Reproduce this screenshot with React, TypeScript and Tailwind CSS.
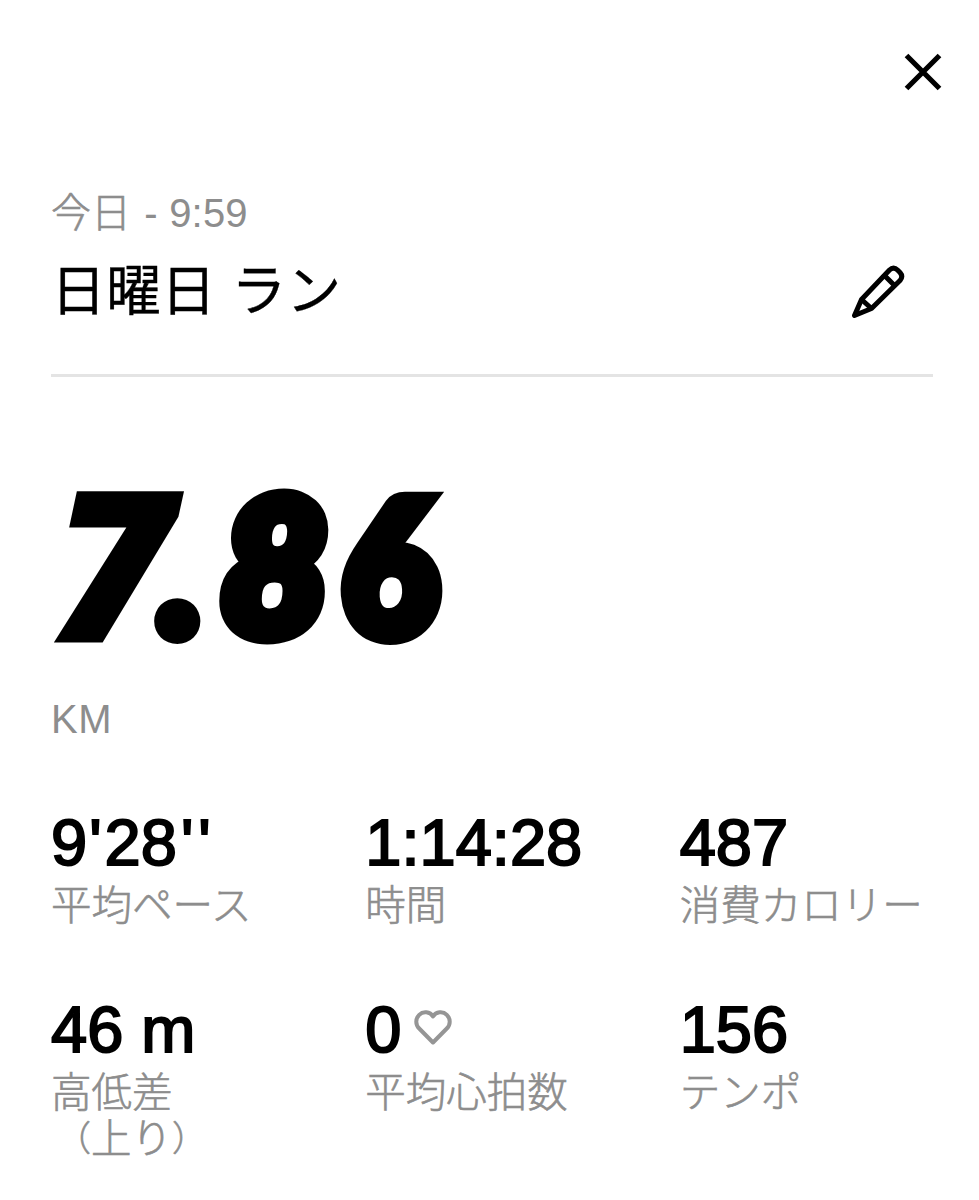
import type { ReactNode } from 'react'

type Stat = {
  value: ReactNode
  label: string
  note?: ReactNode
  icon?: ReactNode
}

function CloseIcon() {
  return (
    <svg width="40" height="40" viewBox="0 0 40 40" fill="none" stroke="currentColor" strokeWidth="5.2">
      <path d="M3.500 3.500L36.500 36.500M36.500 3.500L3.500 36.500" />
    </svg>
  )
}

function PencilIcon() {
  return (
    <svg
      width="56"
      height="56"
      viewBox="0 0 56 56"
      fill="none"
      stroke="currentColor"
      strokeWidth="5"
      strokeLinejoin="round"
    >
      <path d="M4.500 51.500L11.500 35.500L39.500 6Q43.500 2 47.500 6L50 8.500Q53.500 12.500 50 16.500L21.500 44.500Z" />
      <path d="M34.500 11.500L44.500 21.500M11.500 35.500L21.500 44.500" />
    </svg>
  )
}

function HeartIcon() {
  return (
    <svg
      width="38"
      height="36"
      viewBox="0 0 38 36"
      fill="none"
      stroke="currentColor"
      strokeWidth="4"
      strokeLinejoin="round"
      className="mb-[5px] text-[#959595]"
    >
      <path d="M19 6.500C16 1.500 9 1 5.200 4.800C1.300 8.800 1.300 14.500 5.200 18.500L19 32.500L32.800 18.500C36.700 14.500 36.700 8.800 32.800 4.800C29 1 22 1.500 19 6.500Z" />
    </svg>
  )
}

const pace = (
  <>
    9<span className="ml-[2px] mr-[3px]">'</span>28<span className="ml-[4px] tracking-[5px]">''</span>
  </>
)

const ascent = (
  <span className="flex">
    <span className="ml-[5px] text-[35px]">（</span>
    上り
    <span className="text-[35px]">）</span>
  </span>
)

const stats: Stat[] = [
  { value: pace, label: '平均ペース' },
  { value: '1:14:28', label: '時間' },
  { value: '487', label: '消費カロリー' },
  { value: '46 m', label: '高低差', note: ascent },
  { value: '0', label: '平均心拍数', icon: <HeartIcon /> },
  { value: '156', label: 'テンポ' },
]

function StatItem({ value, label, note, icon }: Stat) {
  return (
    <div>
      <div className="flex h-[70px] items-center gap-[13px] pb-[8px]">
        <span className="whitespace-pre text-[65px] leading-[64px] [-webkit-text-stroke:2px_black]">{value}</span>
        {icon}
      </div>
      <div className="pt-px text-[40.5px] font-light leading-[46px] text-[#8d8d8d] [-webkit-text-stroke:0.6px_#8d8d8d]">
        {label}
        {note}
      </div>
    </div>
  )
}

export default function App() {
  return (
    <main
      lang="ja"
      className="h-[1200px] w-[979px] overflow-hidden bg-white pl-[51px] pr-[46px] font-['Liberation_Sans','Noto_Sans_CJK_JP',sans-serif] text-black"
    >
      <div className="-mr-[10px] flex h-[180px] justify-end pt-[52px]">
        <button aria-label="閉じる" className="h-[40px]">
          <CloseIcon />
        </button>
      </div>

      <header className="flex h-[197px] justify-between border-b-[3px] border-[#e4e4e4]">
        <div>
          <p className="pt-[10px] text-[40px] font-light leading-[46px] text-[#8d8d8d]">
            <span className="[-webkit-text-stroke:0.6px_#8d8d8d]">今日</span>
            <span className="ml-[2px] tracking-[0.2px]"> - 9:59</span>
          </p>
          <h1 className="mt-[22px] text-[55px] leading-[66px] [-webkit-text-stroke:0.3px_black]">日曜日 ラン</h1>
        </div>
        <button aria-label="編集" className="mr-[27px] mt-[84px] h-[56px]">
          <PencilIcon />
        </button>
      </header>

      <section className="pt-[78px]">
        <div className="flex h-[200px] items-baseline pl-[2px] font-['Lato',sans-serif] text-[186px] font-black italic leading-[200px] [-webkit-text-stroke:17px_black]">
          <span className="w-[107px] translate-y-[6px] font-['Open_Sans',sans-serif] text-[207px] font-extrabold [-webkit-text-stroke-width:3px]">
            7
          </span>
          <span className="[-webkit-text-stroke-width:16px]">.</span>
          <span className="ml-[16px]">8</span>
          <span className="ml-[15px] origin-[0%_80%] scale-x-[0.96] skew-x-[5deg]">6</span>
        </div>
        <p className="mt-[41px] text-[40px] leading-[46px] tracking-[0.5px] text-[#8d8d8d]">KM</p>
      </section>

      <section className="mt-[70px] grid grid-cols-3 gap-x-[61px] gap-y-[70px]">
        {stats.map((stat) => (
          <StatItem key={stat.label} {...stat} />
        ))}
      </section>
    </main>
  )
}
